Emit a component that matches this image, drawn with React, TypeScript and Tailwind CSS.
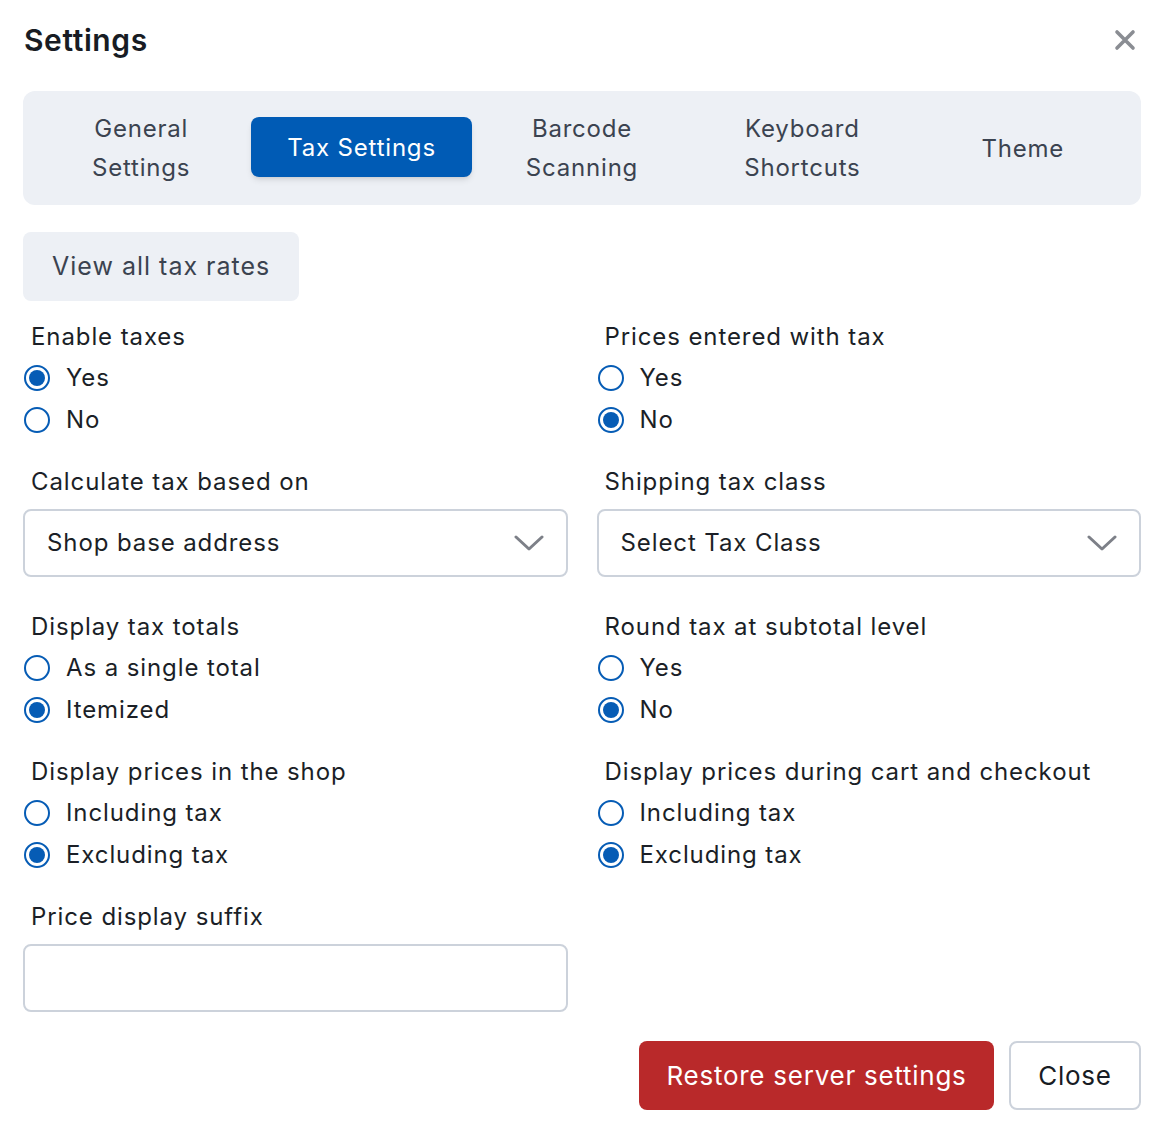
import { useState } from "react";

const tabs = ["General Settings", "Tax Settings", "Barcode Scanning", "Keyboard Shortcuts", "Theme"];

const Radio = ({ checked, label }: { checked: boolean; label: string }) => (
  <label className="flex items-center h-[42px] gap-[16px] cursor-pointer">
    <span className="ml-px w-[26px] h-[26px] rounded-full border-2 border-[#065cb5] flex items-center justify-center shrink-0">
      {checked && <span className="w-[16px] h-[16px] rounded-full bg-[#065cb5]" />}
    </span>
    <span className="text-[24px] tracking-[0.9px] text-[#1b1f27]">{label}</span>
  </label>
);

const FieldLabel = ({ children }: { children: string }) => (
  <div className="pl-[8px] text-[24px] leading-[36px] tracking-[0.9px] text-[#1b1f27]">{children}</div>
);

const RadioField = ({ title, options, value }: { title: string; options: string[]; value: string }) => (
  <div>
    <div className="mb-[2px]">
      <FieldLabel>{title}</FieldLabel>
    </div>
    {options.map((o) => (
      <Radio key={o} label={o} checked={o === value} />
    ))}
  </div>
);

const SelectField = ({ title, value }: { title: string; value: string }) => (
  <div className="mb-[9px]">
    <FieldLabel>{title}</FieldLabel>
    <div className="mt-[9px] h-[68px] rounded-lg border-2 border-[#ccd2db] flex items-center justify-between pl-[22px] pr-[22px]">
      <span className="text-[24px] tracking-[0.9px] text-[#1b1f27]">{value}</span>
      <svg width="30" height="18" viewBox="0 0 30 18" fill="none">
        <path d="M2 3 L15 15 L28 3" stroke="#7d8088" strokeWidth="3" strokeLinecap="round" strokeLinejoin="round" />
      </svg>
    </div>
  </div>
);

export default function App() {
  const [active, setActive] = useState(1);

  return (
    <div className="min-h-screen bg-white pl-[23px] pr-[21px] pt-[22px] font-['Inter',sans-serif]">
      {/* Header */}
      <div className="flex items-center justify-between h-[36px] mb-[33px]">
        <h1 className="pl-px text-[30px] font-semibold tracking-[0.6px] text-[#181c24] leading-[36px]">Settings</h1>
        <button className="mr-[5px] text-[#8a8d93]">
          <svg width="22" height="22" viewBox="0 0 22 22" fill="none">
            <path d="M3 3 L19 19 M19 3 L3 19" stroke="currentColor" strokeWidth="3.6" strokeLinecap="round" />
          </svg>
        </button>
      </div>

      {/* Tabs */}
      <div className="h-[114px] rounded-xl bg-[#edf0f5] px-[8px] grid grid-cols-5 items-center">
        {tabs.map((t, i) => (
          <button
            key={t}
            onClick={() => setActive(i)}
            className={
              i === active
                ? "h-[60px] -mt-[2px] rounded-lg bg-[#005bb5] text-white text-[24px] tracking-[0.8px] leading-[39px] shadow-md"
                : "text-[#3b4350] text-[24px] tracking-[0.8px] leading-[39px] px-[40px]"
            }
          >
            {t}
          </button>
        ))}
      </div>

      <button className="mt-[27px] h-[69px] px-[29px] rounded-lg bg-[#edf0f5] text-[25px] tracking-[1px] text-[#3b4350]">
        View all tax rates
      </button>

      {/* Fields */}
      <div className="mt-[18px] grid grid-cols-2 gap-x-[29px] gap-y-[23px]">
        <RadioField title="Enable taxes" options={["Yes", "No"]} value="Yes" />
        <RadioField title="Prices entered with tax" options={["Yes", "No"]} value="No" />
        <SelectField title="Calculate tax based on" value="Shop base address" />
        <SelectField title="Shipping tax class" value="Select Tax Class" />
        <RadioField title="Display tax totals" options={["As a single total", "Itemized"]} value="Itemized" />
        <RadioField title="Round tax at subtotal level" options={["Yes", "No"]} value="No" />
        <RadioField title="Display prices in the shop" options={["Including tax", "Excluding tax"]} value="Excluding tax" />
        <RadioField
          title="Display prices during cart and checkout"
          options={["Including tax", "Excluding tax"]}
          value="Excluding tax"
        />
        <div>
          <FieldLabel>Price display suffix</FieldLabel>
          <input className="mt-[9px] w-full h-[68px] rounded-lg border-2 border-[#ccd2db] px-[22px] text-[24px] outline-none" />
        </div>
      </div>

      {/* Footer */}
      <div className="mt-[29px] flex justify-end gap-[15px]">
        <button className="h-[69px] w-[355px] rounded-lg bg-[#b9292a] text-white text-[26px] tracking-[0.75px]">
          Restore server settings
        </button>
        <button className="h-[69px] w-[132px] rounded-lg border-2 border-[#ccd2db] text-[26px] tracking-[0.75px] text-[#181c24]">
          Close
        </button>
      </div>
    </div>
  );
}
